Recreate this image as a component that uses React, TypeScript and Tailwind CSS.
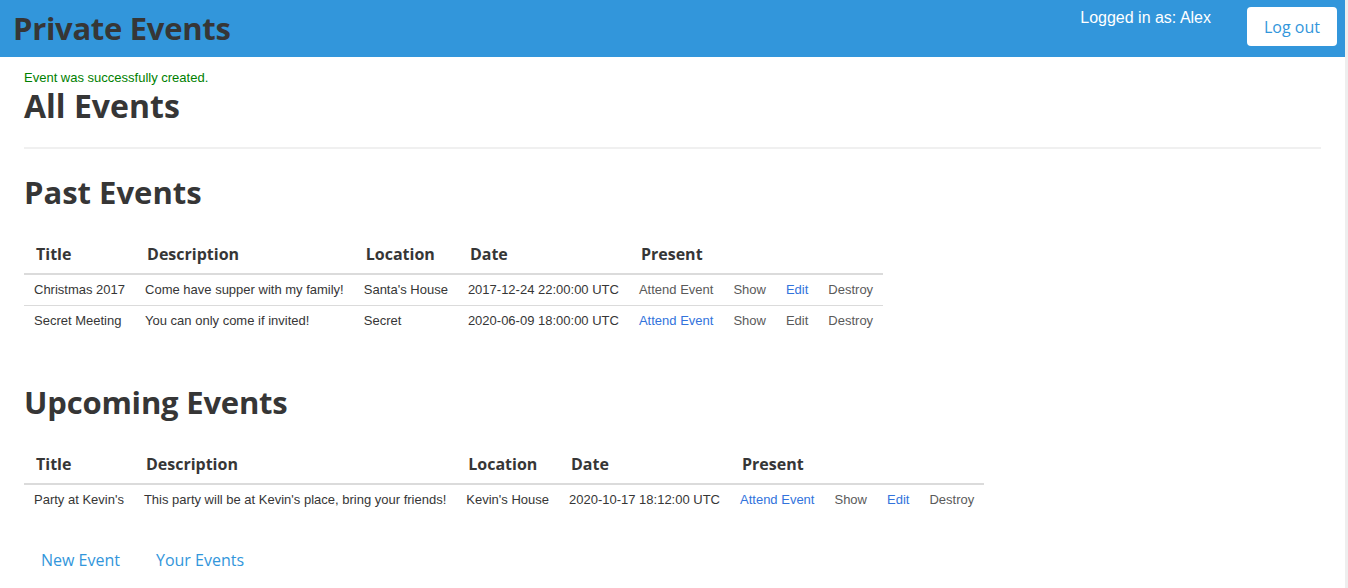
import React from "react";

const heading = { fontFamily: '"Open Sans", "Noto Sans", sans-serif' };
const body = { fontFamily: '"Liberation Sans", Arial, sans-serif' };

type Row = {
  title: string;
  desc: string;
  loc: string;
  date: string;
  attendBlue: boolean;
  editBlue: boolean;
};

const past: Row[] = [
  { title: "Christmas 2017", desc: "Come have supper with my family!", loc: "Santa's House", date: "2017-12-24 22:00:00 UTC", attendBlue: false, editBlue: true },
  { title: "Secret Meeting", desc: "You can only come if invited!", loc: "Secret", date: "2020-06-09 18:00:00 UTC", attendBlue: true, editBlue: false },
];

const upcoming: Row[] = [
  { title: "Party at Kevin's", desc: "This party will be at Kevin's place, bring your friends!", loc: "Kevin's House", date: "2020-10-17 18:12:00 UTC", attendBlue: true, editBlue: true },
];

function EventTable({ rows }: { rows: Row[] }) {
  const th = "text-left font-bold text-[16px] text-[#363636] pl-[12px] pr-[8px] pb-[7px] pt-0 whitespace-nowrap";
  const td = "px-[10px] h-[31px] text-[13px] whitespace-nowrap";
  return (
    <table className="border-collapse mt-[30px]" style={body}>
      <thead>
        <tr className="border-b-2 border-[#dbdbdb]">
          <th className={th} style={heading}>Title</th>
          <th className={th} style={heading}>Description</th>
          <th className={th} style={heading}>Location</th>
          <th className={th} style={heading}>Date</th>
          <th className={th} style={heading} colSpan={4}>Present</th>
        </tr>
      </thead>
      <tbody>
        {rows.map((r, i) => (
          <tr key={r.title} className={i < rows.length - 1 ? "border-b border-[#dbdbdb]" : ""}>
            <td className={`${td} text-[#363636]`}>{r.title}</td>
            <td className={`${td} text-[#363636]`}>{r.desc}</td>
            <td className={`${td} text-[#363636]`}>{r.loc}</td>
            <td className={`${td} text-[#363636]`}>{r.date}</td>
            <td className={td}>
              <a className={r.attendBlue ? "text-[#3273dc]" : "text-[#5a5a5a]"}>Attend Event</a>
            </td>
            <td className={td}><a className="text-[#5a5a5a]">Show</a></td>
            <td className={td}>
              <a className={r.editBlue ? "text-[#3273dc]" : "text-[#5a5a5a]"}>Edit</a>
            </td>
            <td className={td}><a className="text-[#5a5a5a]">Destroy</a></td>
          </tr>
        ))}
      </tbody>
    </table>
  );
}

export default function App() {
  return (
    <div className="flex min-h-[588px] bg-white">
      <div className="flex-1 min-w-0">
        <header className="h-[57px] bg-[#3296db] flex justify-between items-start">
          <h1 className="text-[31px] font-bold text-[#363636] leading-[56px] pl-[13px] tracking-[-0.3px]" style={heading}>
            Private Events
          </h1>
          <div className="flex items-start">
            <span className="text-white text-[16px] mt-[6px] mr-[36px]" style={body}>Logged in as: Alex</span>
            <button className="bg-white rounded-[4px] w-[90px] h-[39px] mt-[7px] mr-[8px] text-[#3296db] text-[16px]" style={heading}>
              Log out
            </button>
          </div>
        </header>
        <main className="px-[24px]">
          <p className="text-[13px] text-[#008000] mt-[13px] leading-[15px]" style={body}>Event was successfully created.</p>
          <h1 className="text-[32px] font-bold text-[#363636] leading-[40px] mt-[1px]" style={heading}>All Events</h1>
          <hr className="border-0 h-[2px] bg-[#f0f0f0] mt-[21px]" />
          <h2 className="text-[31px] font-bold text-[#363636] leading-[40px] mt-[23px]" style={heading}>Past Events</h2>
          <EventTable rows={past} />
          <h2 className="text-[31px] font-bold text-[#363636] leading-[40px] mt-[46px] tracking-[-0.2px]" style={heading}>Upcoming Events</h2>
          <EventTable rows={upcoming} />
          <div className="flex gap-[36px] pl-[17px] mt-[33px] text-[16px] text-[#3296db]" style={heading}>
            <a>New Event</a>
            <a>Your Events</a>
          </div>
        </main>
      </div>
      <div className="w-[3px] bg-[#eeeeee]" />
    </div>
  );
}
